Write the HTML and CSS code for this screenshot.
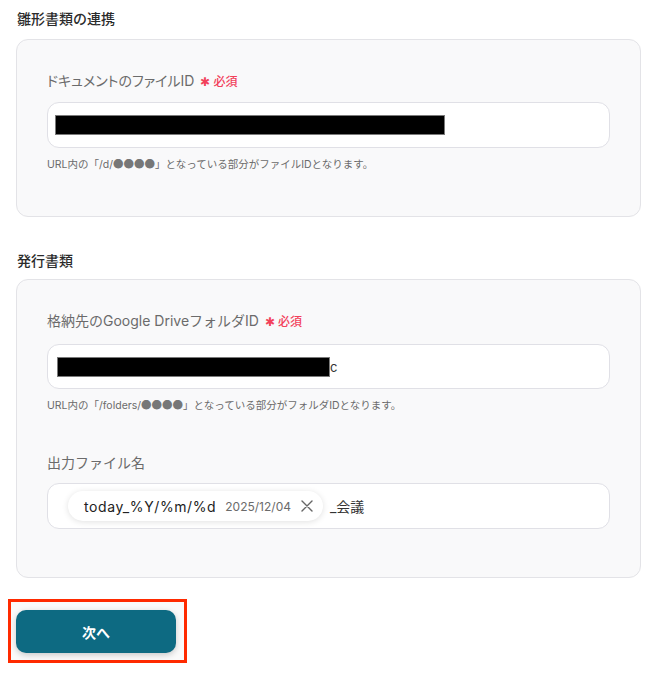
FILE: index.html
```html
<!DOCTYPE html>
<html lang="ja">
<head>
<meta charset="utf-8">
<link rel="stylesheet" href="styles.css">
</head>
<body>
<div class="page">
  <h2 class="section-title">雛形書類の連携</h2>
  <div class="card card-1">
    <div class="field">
      <div class="label label-kana">ドキュメントのファイルID <span class="req">✱ 必須</span></div>
      <div class="input"><span class="redact redact-1"></span></div>
      <div class="help">URL内の「/d/<span class="dots">●●●●</span>」となっている部分がファイルIDとなります。</div>
    </div>
  </div>

  <h2 class="section-title title-2">発行書類</h2>
  <div class="card card-2">
    <div class="field">
      <div class="label">格納先のGoogle DriveフォルダID <span class="req">✱ 必須</span></div>
      <div class="input input-2"><span class="redact redact-2"></span><span class="tail">c</span></div>
      <div class="help">URL内の「/folders/<span class="dots">●●●●</span>」となっている部分がフォルダIDとなります。</div>
    </div>
    <div class="field field-3">
      <div class="label">出力ファイル名</div>
      <div class="input input-chip">
        <span class="chip">
          <span class="chip-key">today_%Y/%m/%d</span>
          <span class="chip-val">2025/12/04</span>
          <svg class="chip-x" width="12" height="12" viewBox="0 0 12 12"><path d="M1 1L11 11M11 1L1 11" stroke="#666" stroke-width="1.4" fill="none" stroke-linecap="round"/></svg>
        </span>
        <span class="after">_会議</span>
      </div>
    </div>
  </div>

  <div class="btn-wrap">
    <button class="btn-next">次へ</button>
  </div>
</div>
</body>
</html>
```

FILE: styles.css
```css
* { box-sizing: border-box; }
html, body { margin: 0; padding: 0; background: #fff; }
body {
  font-family: "Inter", "Noto Sans CJK JP", sans-serif;
  color: #333;
}
.page {
  padding: 9px 19px 0 16px;
}
.section-title {
  margin: 0 0 0 1px;
  font-size: 14px;
  font-weight: 500;
  color: #2b2b2b;
  line-height: 20px;
}
.title-2 { margin-top: 34px; }
.card {
  margin-top: 10px;
  background: #f9f9fa;
  border: 1px solid #e3e3e7;
  border-radius: 12px;
  padding: 0 30px 0 30px;
}
.card-1 { height: 178px; padding-top: 31px; }
.card-2 { height: 299px; padding-top: 31px; margin-top: 8px; }
.field { display: flex; flex-direction: column; }
.label {
  font-size: 14px;
  color: #6b6b6b;
  line-height: 20px;
}
.label-kana { font-feature-settings: "palt"; }
.req { color: #f2415a; font-size: 12px; font-weight: 500; margin-left: 2px; }
.input {
  margin-top: 10px;
  height: 46px;
  background: #fff;
  border: 1px solid #e0e0e6;
  border-radius: 12px;
  display: flex;
  align-items: center;
  padding-left: 7px;
}
.input-2 { margin-top: 12px; height: 45px; }
.redact {
  display: block;
  height: 20px;
  background: #000;
  border: 1px solid #7a7a7a;
}
.redact-1 { width: 390px; }
.redact-2 { width: 273px; margin-left: 2px; }
.tail { font-size: 13px; color: #333; }
.help {
  margin-top: 9px;
  font-size: 10.5px;
  color: #6b6b6b;
  line-height: 14px;
}
.dots { font-family: "Noto Sans CJK JP", sans-serif; color: #777; }
.field-3 { margin-top: 40px; }
.input-chip { padding-left: 20px; }
.chip {
  display: flex;
  align-items: center;
  height: 30px;
  background: #fff;
  border-radius: 15px;
  box-shadow: 0 1px 6px rgba(0,0,0,0.12);
  padding: 0 10px 0 16px;
}
.chip-key { font-size: 14px; color: #222; letter-spacing: 0.6px; }
.chip-val { font-size: 12px; color: #6b6b6b; margin-left: 9px; }
.chip-x { margin-left: 10px; }
.after { font-size: 14px; color: #333; margin-left: 7px; }
.btn-wrap {
  margin-top: 21px;
  margin-left: -8px;
  width: 179px;
  border: 3px solid #ff2a00;
  padding: 8px 8px 7px 5px;
  background: #fafafa;
}
.btn-next {
  display: block;
  width: 160px;
  height: 43px;
  border: none;
  border-radius: 10px;
  background: #0d6a82;
  color: #fff;
  font-family: "Inter", "Noto Sans CJK JP", sans-serif;
  font-size: 14px;
  font-weight: 700;
  box-shadow: 0 2px 6px rgba(0,0,0,0.2);
}
```
